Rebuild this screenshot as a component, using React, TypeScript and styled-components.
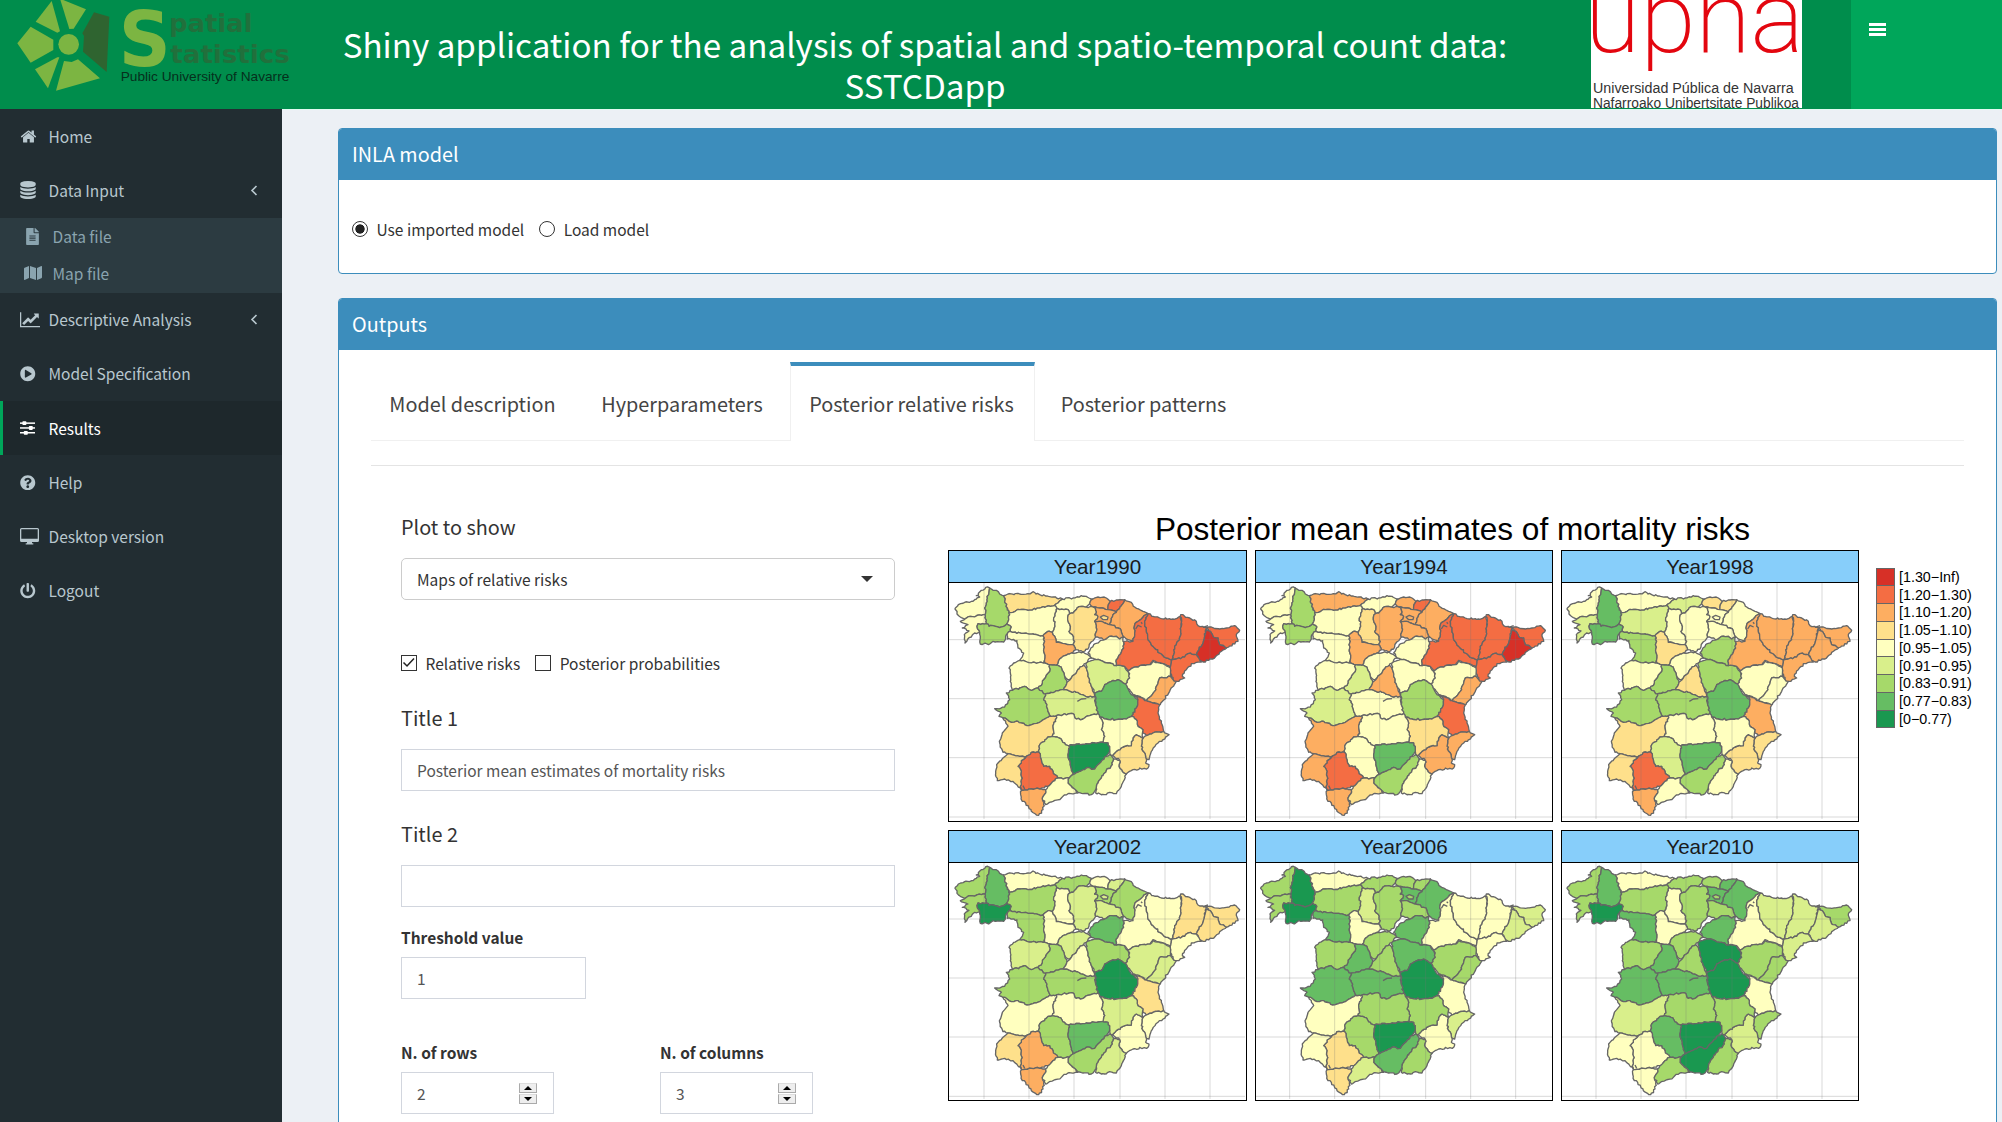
import React from "react";
import styled, { createGlobalStyle, css } from "styled-components";
import { FaFileAlt, FaMap, FaPlayCircle, FaPowerOff, FaQuestionCircle } from "react-icons/fa";

const sans = `"Noto Sans CJK SC", "Noto Sans", sans-serif`;
const blue = "#3c8dbc";

const GlobalStyle = createGlobalStyle`
  * { box-sizing: border-box; }
  html, body { margin: 0; padding: 0; overflow: hidden; }
  body { font-family: ${sans}; font-size: 15.5px; color: #333; background: #ecf0f5; }
`;

/* ---------- page frame ---------- */

const Page = styled.div`
  width: 2002px;
  height: 1122px;
  overflow: hidden;
  display: flex;
  flex-direction: column;
`;

const Header = styled.header`
  height: 109px;
  flex: none;
  display: flex;
  background: #008d4c;
`;

const Brand = styled.div`
  width: 282px;
  svg { display: block; }
`;

const AppTitle = styled.h1`
  margin: 0;
  width: 1286px;
  padding-top: 23px;
  text-align: center;
  color: #fff;
  font-weight: 400;
  font-size: 33.2px;
  line-height: 41px;
`;

const UpnaLogo = styled.div`
  width: 211px;
  height: 108px;
  margin: 0 49px 0 23px;
  background: #fff;
  overflow: hidden;
  svg { display: block; }
`;

const NavToggle = styled.button`
  flex: 1;
  border: 0;
  background: #00a65a;
  padding: 23px 0 0 18px;
  display: flex;
  flex-direction: column;
  gap: 2px;
`;

const Bar = styled.span`
  width: 17px;
  height: 3px;
  background: #fff;
`;

const Body = styled.div`
  flex: 1;
  min-height: 0;
  display: flex;
`;

/* ---------- sidebar ---------- */

const Sidebar = styled.nav`
  width: 282px;
  flex: none;
  background: #222d32;
`;

const NavItem = styled.a<{ $active?: boolean }>`
  height: 54.25px;
  display: flex;
  align-items: center;
  padding-left: 17px;
  padding-right: 24px;
  border-left: 3px solid ${(p) => (p.$active ? "#00a65a" : "transparent")};
  background: ${(p) => (p.$active ? "#1e282c" : "transparent")};
  color: ${(p) => (p.$active ? "#fff" : "#b8c7ce")};
  line-height: 20px;
`;

const IconSlot = styled.span`
  width: 28.5px;
  display: flex;
  align-items: center;
  svg { display: block; flex: none; }
`;

const NavText = styled.span`
  flex: 1;
  padding-bottom: 1px;
  white-space: nowrap;
`;

const SubMenu = styled.div`
  background: #2c3b41;
  height: 75px;
`;

const SubItem = styled.a`
  height: 37px;
  display: flex;
  align-items: center;
  padding-left: 24px;
  color: #8aa4af;
  line-height: 20px;
`;

/* ---------- boxes ---------- */

const Content = styled.main`
  flex: 1;
  min-width: 0;
  border-top: 1px solid #e2fbf2;
  padding: 18px 5px 0 56px;
  display: flex;
  flex-direction: column;
  gap: 24px;
`;

const Box = styled.section<{ $height: number }>`
  height: ${(p) => p.$height}px;
  flex: none;
  background: #fff;
  border: 1px solid ${blue};
  border-radius: 4px;
  overflow: hidden;
`;

const BoxHeader = styled.h3`
  margin: 0;
  height: 51px;
  padding-left: 13px;
  background: ${blue};
  color: #fff;
  font-weight: 400;
  font-size: 19.8px;
  line-height: 49px;
`;

const Options = styled.div<{ $gap: number }>`
  display: flex;
  align-items: center;
  gap: ${(p) => p.$gap}px;
`;

const ModelOptions = styled(Options)`
  padding: 38px 0 0 13px;
`;

const Option = styled.label`
  display: flex;
  align-items: center;
  gap: 8.5px;
  line-height: 22px;
  white-space: nowrap;
`;

const Radio = styled.span<{ $on?: boolean }>`
  width: 16px;
  height: 16px;
  border: 1.4px solid #333;
  border-radius: 50%;
  background: ${(p) => (p.$on ? "radial-gradient(circle, #222 0 4.3px, #fff 5px)" : "#fff")};
`;

const Check = styled.span`
  width: 16px;
  height: 16px;
  border: 1.4px solid #333;
  background: #fff;
  svg { display: block; }
`;

const Tabs = styled.div`
  display: flex;
  margin: 12px 32px 0;
  height: 79px;
  border-bottom: 1px solid #f0f0f0;
`;

const Tab = styled.div<{ $width: number; $active?: boolean }>`
  width: ${(p) => p.$width}px;
  height: 79px;
  text-align: center;
  font-size: 19.85px;
  line-height: 76px;
  color: #444;
  white-space: nowrap;
  border-top: 4px solid transparent;
  ${(p) =>
    p.$active &&
    css`
      border-top-color: ${blue};
      border-left: 1px solid #f0f0f0;
      border-right: 1px solid #f0f0f0;
      background: #fff;
    `}
`;

const TabText = styled.span`
  margin-right: 2px;
`;

const Rule = styled.div`
  margin: 24px 32px 0;
  height: 1px;
  background: #e4e4e4;
`;

const Split = styled.div`
  display: flex;
`;

/* ---------- form ---------- */

const Form = styled.form`
  width: 494px;
  margin: 0 0 0 62px;
  padding-top: 48px;
  flex: none;
`;

const Heading = styled.div<{ $top?: number }>`
  margin-top: ${(p) => p.$top ?? 0}px;
  height: 44px;
  font-size: 19.85px;
  line-height: 26px;
  color: #333;
`;

const Field = styled.div<{ $width?: number; $rounded?: boolean }>`
  width: ${(p) => p.$width ?? 494}px;
  height: 42px;
  border: 1px solid ${(p) => (p.$rounded ? "#ccc" : "#d2d6de")};
  border-radius: ${(p) => (p.$rounded ? 5 : 0)}px;
  padding: 0 16px 0 15px;
  display: flex;
  align-items: center;
  justify-content: space-between;
  color: ${(p) => (p.$rounded ? "#333" : "#555")};
  white-space: nowrap;
`;

const Caret = styled.span`
  margin-right: 5px;
  border: 6px solid transparent;
  border-top: 6px solid #333;
  border-bottom: 0;
`;

const CheckOptions = styled(Options)`
  height: 22px;
  margin-top: 52px;
`;

const Label = styled.div`
  font-weight: 700;
  line-height: 18px;
  height: 29px;
`;

const Threshold = styled.div`
  margin-top: 21px;
`;

const Counts = styled.div`
  display: flex;
  gap: 106px;
  margin-top: 44px;
`;

const Spinner = styled.span`
  width: 18px;
  height: 21px;
  display: grid;
  grid-template-rows: 1fr 1fr;
  gap: 1px;
`;

const SpinButton = styled.span`
  border: 1px solid #aaa;
  border-top-color: #ddd;
  background: #eee;
  display: flex;
  align-items: center;
  justify-content: center;
  svg { display: block; }
`;

/* ---------- plot ---------- */

const Plot = styled.figure`
  margin: 41px 0 0 53px;
  width: 1040px;
  font-family: "Liberation Sans", Arial, sans-serif;
  color: #000;
`;

const PlotTitle = styled.figcaption`
  width: 912px;
  height: 43px;
  padding: 4px 0 0 97px;
  text-align: center;
  font-size: 31.6px;
  line-height: 36px;
  white-space: nowrap;
`;

const PlotArea = styled.div`
  display: flex;
`;

const Facets = styled.div`
  width: 911px;
  display: grid;
  grid-template-columns: 299px 298px 298px;
  column-gap: 8px;
  row-gap: 8px;
`;

const Facet = styled.div`
  height: 271.5px;
  border: 1.3px solid #000;
  background: #fff;
  svg { display: block; }
`;

const Strip = styled.div`
  height: 32px;
  background: #87cefa;
  border-bottom: 1.3px solid #000;
  text-align: center;
  font-size: 20.6px;
  line-height: 32px;
  color: #1a1a1a;
`;

const Legend = styled.div`
  padding: 18px 0 0 17px;
`;

const LegendRow = styled.div`
  display: flex;
  align-items: center;
  gap: 4px;
  height: 17.75px;
  font-size: 14.3px;
  white-space: nowrap;
`;

const Swatch = styled.span<{ $color: string }>`
  width: 19px;
  height: 18.75px;
  border: 1px solid #666;
  background: ${(p) => p.$color};
`;

/* ---------- map data ---------- */

const palette = ["#d73027", "#f46d43", "#fdae61", "#fee08b", "#ffffbf", "#d9ef8b", "#a6d96a", "#66bd63", "#1a9850"];
const classes = ["[1.30−Inf)", "[1.20−1.30)", "[1.10−1.20)", "[1.05−1.10)", "[0.95−1.05)", "[0.91−0.95)", "[0.83−0.91)", "[0.77−0.83)", "[0−0.77)"];
const years = [1990, 1994, 1998, 2002, 2006, 2010];

/* Each province: outline, then its risk class (1 = highest) in each of the six years. */
const provinces: [string, string][] = [
  ["150,265 142,300 137,322 136,345 108,350 92,350 76,358 62,352 52,343 46,328 56,315 75,308 100,305 120,292 110,288 125,272 138,263", "555777"],
  ["150,265 160,272 170,272 180,283 192,288 197,310 203,325 210,345 202,372 192,380 180,384 160,378 148,380 140,372 136,345 137,322 142,300", "778898"],
  ["136,345 140,372 115,372 112,380 120,398 105,400 95,412 76,430 74,405 88,394 68,385 85,375 62,365 76,358 92,350 108,350", "556777"],
  ["140,372 148,380 160,378 180,384 192,380 202,372 215,382 212,395 203,402 192,427 160,425 150,433 122,433 122,410 120,398 112,380 115,372", "778999"],
  ["192,288 197,310 203,325 208,340 240,330 265,332 300,325 345,317 355,310 368,298 340,292 300,285 280,276 265,282 240,283 205,283", "435555"],
  ["208,340 240,330 265,332 300,325 345,317 352,326 350,335 342,355 346,380 338,398 325,395 310,408 280,403 250,401 218,398 212,395 215,382 202,372 210,345", "556777"],
  ["368,298 355,310 345,317 352,326 360,330 385,330 390,342 400,340 412,325 430,320 440,322 450,312 452,305 460,298 448,295 440,290 425,288 400,295", "556777"],
  ["352,326 360,330 385,330 390,342 384,360 392,385 388,395 398,405 405,425 400,435 375,432 350,428 345,410 338,398 346,380 342,355 350,335", "545565"],
  ["390,342 384,360 392,385 388,395 398,405 405,425 400,435 408,450 430,457 445,448 452,430 468,412 470,385 465,365 475,350 465,345 470,335 462,322 440,322 430,320 412,325 400,340", "435677"],
  ["460,298 475,292 500,295 512,305 505,320 505,330 480,325 462,322 450,312 452,305", "334577"],
  ["512,305 555,300 545,318 530,338 505,330 505,320", "224678"],
  ["462,322 480,325 505,330 530,338 520,345 515,360 510,375 495,370 478,365 465,365 475,350 465,345 470,335", "335788"],
  ["555,300 575,308 585,322 610,335 625,342 605,358 590,368 583,385 585,400 580,425 560,418 552,412 545,395 535,385 510,375 515,360 520,345 530,338 545,318", "335788"],
  ["465,365 478,365 495,370 510,375 535,385 545,395 552,412 540,418 530,410 510,410 495,420 468,412 470,385", "335677"],
  ["552,412 540,418 530,410 510,410 495,420 480,425 462,435 445,460 455,475 470,480 490,485 510,490 530,498 530,480 545,458 552,445", "557888"],
  ["212,395 218,398 250,401 280,403 310,408 315,425 312,450 315,480 310,490 285,488 262,487 240,482 252,460 235,445 232,423 203,418 203,402", "557788"],
  ["310,408 325,395 338,398 345,410 350,428 375,432 400,435 408,450 395,460 375,468 360,478 350,497 330,495 315,490 315,480 312,450 315,425", "334555"],
  ["350,497 360,478 375,468 395,460 408,460 430,457 445,465 455,475 440,490 428,500 412,515 395,535 385,540 375,530 370,515 360,500", "555677"],
  ["330,495 350,497 360,500 370,515 375,530 382,548 372,570 345,577 318,583 300,572 295,565 308,550 318,530 330,515", "767788"],
  ["310,490 315,490 330,495 330,515 318,530 308,550 295,565 275,572 255,560 240,565 218,572 212,545 212,510 208,505 222,490 240,482 262,487 285,488", "555677"],
  ["218,572 240,565 255,560 275,572 295,565 300,572 318,583 312,600 322,615 325,635 335,650 320,655 300,668 262,678 235,665 215,668 190,655 178,650 185,640 165,627 195,622 210,600 200,580", "767788"],
  ["190,655 215,668 235,665 262,678 300,668 320,655 335,650 350,648 348,665 340,678 342,695 338,710 325,712 300,735 298,758 275,758 260,770 240,770 205,762 190,758 180,730 188,700 205,680", "434556"],
  ["318,583 345,577 372,570 392,575 410,578 430,585 445,592 465,590 468,615 475,642 450,648 430,658 410,658 400,642 370,645 350,648 335,650 325,635 322,615 312,600", "657788"],
  ["432,497 440,505 445,530 455,560 465,590 445,592 430,585 410,578 392,575 372,570 382,548 395,535 412,515 428,500", "434577"],
  ["440,490 455,483 470,480 490,485 510,490 530,498 555,500 565,515 570,535 558,553 535,540 515,545 495,555 485,575 466,580 455,560 445,530 440,505", "657789"],
  ["466,580 485,575 495,555 515,545 535,540 558,553 575,585 595,600 590,625 575,650 560,658 530,660 500,658 480,652 475,642 468,615", "878999"],
  ["625,342 605,358 590,368 583,385 585,400 580,425 552,425 552,445 545,458 530,480 530,498 555,500 565,513 600,498 632,495 640,482 670,492 692,502 697,480 680,475 660,460 640,440 625,420 620,390 615,365", "223555"],
  ["625,342 640,350 660,355 700,358 723,352 725,380 720,420 705,440 702,465 697,480 680,475 660,460 640,440 625,420 620,390 615,365", "223556"],
  ["723,345 750,355 770,365 775,378 800,383 795,410 790,430 778,450 770,465 745,462 735,472 710,478 697,480 702,465 705,440 720,420 725,380", "223456"],
  ["800,385 815,382 840,388 860,385 885,378 900,392 890,405 895,425 860,445 840,435 835,415 820,410 812,395", "223467"],
  ["800,390 812,395 820,410 835,415 840,435 860,445 840,458 820,478 790,487 780,482 770,465 778,450 790,430 795,410", "113466"],
  ["697,480 710,478 735,472 745,462 770,465 785,487 755,492 740,510 728,530 735,535 710,545 700,540 692,520 692,502", "223556"],
  ["565,513 600,498 632,495 640,485 670,492 692,505 692,530 660,535 650,560 645,575 620,603 600,590 580,585 558,553 570,535", "555677"],
  ["660,535 692,530 700,540 710,545 690,575 662,615 640,610 620,603 645,575 650,560", "335677"],
  ["582,585 600,592 620,603 640,610 660,615 655,640 665,670 672,695 640,700 620,708 610,700 610,690 595,680 590,660 575,650 590,625 595,600", "223455"],
  ["672,695 688,705 655,730 635,755 628,780 620,778 610,755 605,740 610,715 620,708 640,700", "434567"],
  ["610,715 590,705 580,715 575,738 550,742 530,755 515,768 540,782 540,805 560,823 580,810 625,805 628,795 618,790 620,778 610,755 605,740", "434556"],
  ["480,652 500,658 530,660 560,658 575,650 590,660 595,680 610,690 610,715 590,705 580,715 575,738 550,742 530,755 515,768 510,755 505,730 490,727 495,710 485,690 490,670", "545677"],
  ["350,648 370,645 400,642 410,658 430,658 450,648 475,642 480,652 490,670 485,690 495,710 490,727 440,732 388,738 375,730 358,715 338,710 342,695 340,678 348,665", "555577"],
  ["338,710 358,715 375,730 388,738 385,765 392,790 400,825 388,835 370,838 355,835 340,815 330,800 312,800 305,780 298,758 300,735 325,712", "656778"],
  ["388,738 440,732 490,727 505,730 510,755 500,770 485,785 475,795 465,808 440,805 420,815 400,825 392,790 385,765", "988899"],
  ["510,765 522,778 518,795 500,812 485,835 475,850 465,875 455,885 430,882 415,878 395,860 385,850 388,835 400,825 420,815 440,805 465,808 475,795 485,785 500,770", "777789"],
  ["522,778 540,782 540,805 560,823 545,860 530,882 510,878 495,885 468,880 475,850 485,835 500,812 518,795", "555677"],
  ["275,758 298,758 305,780 312,800 330,800 340,815 355,835 340,845 325,860 300,868 275,868 250,872 243,865 245,840 245,815 235,800 245,790 250,780 260,770", "222345"],
  ["190,775 205,762 240,770 260,770 250,780 245,790 235,800 245,815 245,840 243,865 220,845 195,838 173,843 168,815 175,790", "434455"],
  ["243,865 250,872 275,868 300,868 318,870 318,880 308,895 312,915 310,930 297,947 275,935 258,910 248,905 243,885", "333345"],
  ["318,870 325,860 340,845 355,835 370,838 388,835 385,850 395,860 415,880 385,882 365,895 340,905 318,915 308,895 318,880", "545567"],
];

/* Repeatable noise in [-1, 1] for a point, so two neighbours roughen a shared border alike. */
const noise = (x: number, y: number) => {
  const s = Math.sin(x * 12.9898 + y * 78.233) * 43758.5453;
  return (s - Math.floor(s)) * 2 - 1;
};

type Pt = [number, number];

const roughen = (outline: string): string => {
  const pts = outline.split(" ").map((p) => p.split(",").map(Number) as Pt);
  const out: string[] = [];
  pts.forEach((a, i) => {
    const b = pts[(i + 1) % pts.length];
    const flip = a[0] > b[0] || (a[0] === b[0] && a[1] > b[1]);
    const [s, e] = flip ? [b, a] : [a, b];
    const n = Math.max(1, Math.round(Math.hypot(e[0] - s[0], e[1] - s[1]) / 6));
    const seg: Pt[] = [];
    for (let k = 1; k < n; k++) {
      const x = s[0] + ((e[0] - s[0]) * k) / n;
      const y = s[1] + ((e[1] - s[1]) * k) / n;
      seg.push([x + noise(x, y) * 2.6, y + noise(y, x) * 2.6]);
    }
    if (flip) seg.reverse();
    out.push(`${a[0]},${a[1]}`, ...seg.map((p) => `${p[0].toFixed(1)},${p[1].toFixed(1)}`));
  });
  return out.join(" ");
};

const shapes = provinces.map(([outline, risk]) => ({ points: roughen(outline), risk }));

const SpainMap = ({ index, shift }: { index: number; shift: number }) => (
  <svg width="296" height="236" viewBox={`${28 + shift} ${index > 2 ? 252 : 250} 888 708`}>
    <g stroke="#666" strokeWidth="4" strokeLinejoin="round">
      {shapes.map((s, i) => (
        <polygon key={i} points={s.points} fill={palette[Number(s.risk[index]) - 1]} />
      ))}
      <polygon points="482,352 492,347 505,352 503,360 490,360" fill={palette[Number(shapes[8].risk[index]) - 1]} />
      <path d="M413 605 L425 598 L440 597 M588 388 L595 377 L606 382 M604 368 L608 372 M255 868 L250 858 M790 383 L805 378" fill="none" />
    </g>
    <g stroke="#777" strokeOpacity=".28" strokeWidth="3">
      {[133, 268, 403, 541, 676, 811].map((x) => (
        <line key={x} x1={x} x2={x} y1="240" y2="970" />
      ))}
      {[420, 597, 774, 952].map((y) => (
        <line key={y} x1="0" x2="940" y1={y} y2={y} />
      ))}
    </g>
  </svg>
);

/* ---------- icons ---------- */

const HomeIcon = () => (
  <svg width="17" height="17" viewBox="0 0 1792 1792" fill="currentColor">
    <path d="M1472 992v480q0 26-19 45t-45 19h-384v-384h-256v384h-384q-26 0-45-19t-19-45v-480q0-1 .5-3t.5-3l575-474 575 474q1 2 1 6zm223-69l-62 74q-8 9-21 11h-3q-13 0-21-7l-692-577-692 577q-12 8-24 7-13-2-21-11l-62-74q-8-10-7-23.5t11-21.5l719-599q32-26 76-26t76 26l244 204v-195q0-14 9-23t23-9h192q14 0 23 9t9 23v408l219 182q10 8 11 21.5t-7 23.5z" />
  </svg>
);

const DatabaseIcon = () => (
  <svg width="16" height="18" viewBox="128 0 1536 1792" fill="currentColor">
    <path d="M896 768q237 0 443-43t325-127v170q0 69-103 128t-280 93.5-385 34.5-385-34.5-280-93.5-103-128v-170q119 84 325 127t443 43zm0 768q237 0 443-43t325-127v170q0 69-103 128t-280 93.5-385 34.5-385-34.5-280-93.5-103-128v-170q119 84 325 127t443 43zm0-384q237 0 443-43t325-127v170q0 69-103 128t-280 93.5-385 34.5-385-34.5-280-93.5-103-128v-170q119 84 325 127t443 43zm0-1152q208 0 385 34.5t280 93.5 103 128v128q0 69-103 128t-280 93.5-385 34.5-385-34.5-280-93.5-103-128v-128q0-69 103-128t280-93.5 385-34.5z" />
  </svg>
);

const ChartIcon = () => (
  <svg width="20" height="17.5" viewBox="0 0 2048 1792" fill="currentColor">
    <path d="M2048 1536v128h-2048v-1536h128v1408h1920zm-128-1248v435q0 21-19.5 29.5t-35.5-7.5l-121-121-633 633q-10 10-23 10t-23-10l-233-233-416 416-192-192 585-585q10-10 23-10t23 10l233 233 464-464-121-121q-16-16-7.5-35.5t29.5-19.5h435q14 0 23 9t9 23z" />
  </svg>
);

const SlidersIcon = () => (
  <svg width="15" height="14" viewBox="0 0 15 14" fill="currentColor">
    <rect y="1.4" width="15" height="1.5" />
    <rect y="6.2" width="15" height="1.5" />
    <rect y="11" width="15" height="1.5" />
    <rect x="2.4" y="0.3" width="4" height="3.8" rx=".8" />
    <rect x="8.8" y="5.1" width="4" height="3.8" rx=".8" />
    <rect x="3.8" y="9.9" width="4" height="3.8" rx=".8" />
  </svg>
);

const ScreenIcon = () => (
  <svg width="19" height="17" viewBox="0 0 19 17" fill="currentColor">
    <path fillRule="evenodd" d="M1.5 0h16a1.5 1.5 0 0 1 1.5 1.5v11a1.5 1.5 0 0 1-1.5 1.5H12v1.2h1.3V16.5H5.700V15.200H7V14H1.500A1.500 1.500 0 0 1 0 12.500v-11A1.500 1.500 0 0 1 1.500 0zM1.300 1.300v9.400h16.400V1.300z" />
  </svg>
);

const AngleLeft = () => (
  <svg width="8" height="11" viewBox="0 0 8 11" fill="none" stroke="currentColor" strokeWidth="1.6">
    <path d="M6.500 1L2 5.500L6.500 10" />
  </svg>
);

const SpatialLogo = () => (
  <svg width="300" height="109" viewBox="0 0 900 327">
    <g fill="#7cb542">
      <polygon points="155,3 107,65 172,98 180,94" />
      <polygon points="180,-4 258,28 221,86 208,87" />
      <polygon points="92,80 160,119 160,150 92,188 52,130" />
      <polygon points="105,208 172,172 178,172 144,265" />
      <polygon points="192,183 215,186 234,178 300,235 168,272" />
      <circle cx="206" cy="133" r="31" />
      <text x="356" y="199" fontFamily="DejaVu Sans" fontWeight="700" fontSize="230" textLength="156" lengthAdjust="spacingAndGlyphs">S</text>
    </g>
    <polygon points="282,37 328,50 320,216 249,155 252,108 247,100" fill="#2f6430" />
    <g fill="#21703c" fontFamily="DejaVu Sans" fontWeight="700" fontSize="74">
      <text x="507" y="95" textLength="250" lengthAdjust="spacingAndGlyphs">patial</text>
      <text x="511" y="190" textLength="358" lengthAdjust="spacingAndGlyphs">tatistics</text>
    </g>
    <text x="362" y="242" fill="#06301c" fontFamily="Liberation Sans" fontSize="39" textLength="506" lengthAdjust="spacingAndGlyphs">Public University of Navarre</text>
  </svg>
);

const UpnaMark = () => (
  <svg width="211" height="108" viewBox="0 0 633 324">
    <text x="-18" y="156" fill="#e3060f" fontFamily="Roboto" fontWeight="200" fontSize="302" textLength="657" lengthAdjust="spacingAndGlyphs">upna</text>
    <rect x="100" y="213" width="200" height="60" fill="#fff" />
    <g fill="#333" fontFamily="Liberation Sans" fontSize="42">
      <text x="6" y="278" textLength="602" lengthAdjust="spacingAndGlyphs">Universidad Pública de Navarra</text>
      <text x="6" y="324" textLength="618" lengthAdjust="spacingAndGlyphs">Nafarroako Unibertsitate Publikoa</text>
    </g>
  </svg>
);

const Stepper = () => (
  <Spinner>
    <SpinButton>
      <svg width="8" height="4" viewBox="0 0 8 4"><path d="M0 4L4 0L8 4z" /></svg>
    </SpinButton>
    <SpinButton>
      <svg width="8" height="4" viewBox="0 0 8 4"><path d="M0 0L4 4L8 0z" /></svg>
    </SpinButton>
  </Spinner>
);

const Entry = ({ icon, text, active, arrow }: { icon: React.ReactNode; text: string; active?: boolean; arrow?: boolean }) => (
  <NavItem $active={active}>
    <IconSlot>{icon}</IconSlot>
    <NavText>{text}</NavText>
    {arrow && <AngleLeft />}
  </NavItem>
);

export default function App() {
  return (
    <Page>
      <GlobalStyle />
      <Header>
        <Brand><SpatialLogo /></Brand>
        <AppTitle>
          Shiny application for the analysis of spatial and spatio-temporal count data:
          <br />
          SSTCDapp
        </AppTitle>
        <UpnaLogo><UpnaMark /></UpnaLogo>
        <NavToggle aria-label="Toggle navigation">
          <Bar /><Bar /><Bar />
        </NavToggle>
      </Header>
      <Body>
        <Sidebar>
          <Entry icon={<HomeIcon />} text="Home" />
          <Entry icon={<DatabaseIcon />} text="Data Input" arrow />
          <SubMenu>
            <SubItem><IconSlot><FaFileAlt size={17} /></IconSlot>Data file</SubItem>
            <SubItem><IconSlot><FaMap size={18} /></IconSlot>Map file</SubItem>
          </SubMenu>
          <Entry icon={<ChartIcon />} text="Descriptive Analysis" arrow />
          <Entry icon={<FaPlayCircle size={15.500} />} text="Model Specification" />
          <Entry icon={<SlidersIcon />} text="Results" active />
          <Entry icon={<FaQuestionCircle size={15.500} />} text="Help" />
          <Entry icon={<ScreenIcon />} text="Desktop version" />
          <Entry icon={<FaPowerOff size={15.500} />} text="Logout" />
        </Sidebar>
        <Content>
          <Box $height={146}>
            <BoxHeader>INLA model</BoxHeader>
            <ModelOptions $gap={15}>
              <Option><Radio $on />Use imported model</Option>
              <Option><Radio />Load model</Option>
            </ModelOptions>
          </Box>
          <Box $height={900}>
            <BoxHeader>Outputs</BoxHeader>
            <Tabs>
              <Tab $width={205}><TabText>Model description</TabText></Tab>
              <Tab $width={214}><TabText>Hyperparameters</TabText></Tab>
              <Tab $width={245} $active><TabText>Posterior relative risks</TabText></Tab>
              <Tab $width={219}><TabText>Posterior patterns</TabText></Tab>
            </Tabs>
            <Rule />
            <Split>
              <Form>
                <Heading>Plot to show</Heading>
                <Field $rounded>Maps of relative risks<Caret /></Field>
                <CheckOptions $gap={15}>
                  <Option>
                    <Check>
                      <svg width="13" height="13" viewBox="0 0 13 13" fill="none" stroke="#222" strokeWidth="1.500"><path d="M1.500 6.500L5 10L12 2.500" /></svg>
                    </Check>
                    Relative risks
                  </Option>
                  <Option><Check />Posterior probabilities</Option>
                </CheckOptions>
                <Heading $top={31}>Title 1</Heading>
                <Field>Posterior mean estimates of mortality risks</Field>
                <Heading $top={30}>Title 2</Heading>
                <Field />
                <Threshold>
                  <Label>Threshold value</Label>
                  <Field $width={185}>1</Field>
                </Threshold>
                <Counts>
                  <div>
                    <Label>N. of rows</Label>
                    <Field $width={153}>2<Stepper /></Field>
                  </div>
                  <div>
                    <Label>N. of columns</Label>
                    <Field $width={153}>3<Stepper /></Field>
                  </div>
                </Counts>
              </Form>
              <Plot>
                <PlotTitle>Posterior mean estimates of mortality risks</PlotTitle>
                <PlotArea>
                  <Facets>
                    {years.map((year, i) => (
                      <Facet key={year}>
                        <Strip>Year{year}</Strip>
                        <SpainMap index={i} shift={[0, 4, 3][i % 3]} />
                      </Facet>
                    ))}
                  </Facets>
                  <Legend>
                    {classes.map((name, i) => (
                      <LegendRow key={name}><Swatch $color={palette[i]} />{name}</LegendRow>
                    ))}
                  </Legend>
                </PlotArea>
              </Plot>
            </Split>
          </Box>
        </Content>
      </Body>
    </Page>
  );
}
